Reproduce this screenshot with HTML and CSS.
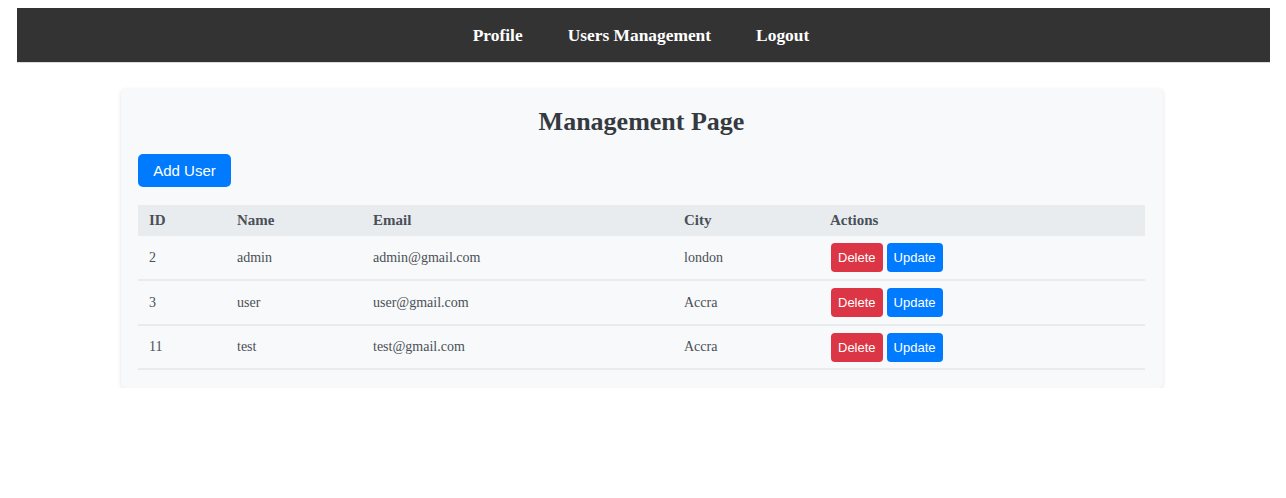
FILE: index.html
```html
<!DOCTYPE html>
<html lang="en">
<head>
<meta charset="utf-8">
<title>Management Page</title>
<link rel="stylesheet" href="styles.css">
</head>
<body>
<nav class="navbar">
  <a class="nav-link" href="#">Profile</a>
  <a class="nav-link" href="#">Users Management</a>
  <a class="nav-link" href="#">Logout</a>
</nav>
<main class="card">
  <h1 class="title">Management Page</h1>
  <button class="btn btn-primary btn-add">Add User</button>
  <table class="users">
    <colgroup>
      <col class="c-id"><col class="c-name"><col class="c-email"><col class="c-city"><col class="c-actions">
    </colgroup>
    <thead>
      <tr><th>ID</th><th>Name</th><th>Email</th><th>City</th><th>Actions</th></tr>
    </thead>
    <tbody>
      <tr><td>2</td><td>admin</td><td>admin@gmail.com</td><td>london</td><td><button class="btn btn-sm btn-danger">Delete</button> <button class="btn btn-sm btn-primary">Update</button></td></tr>
      <tr class="mid"><td>3</td><td>user</td><td>user@gmail.com</td><td>Accra</td><td><button class="btn btn-sm btn-danger">Delete</button> <button class="btn btn-sm btn-primary">Update</button></td></tr>
      <tr><td>11</td><td>test</td><td>test@gmail.com</td><td>Accra</td><td><button class="btn btn-sm btn-danger">Delete</button> <button class="btn btn-sm btn-primary">Update</button></td></tr>
    </tbody>
  </table>
</main>
</body>
</html>
```
FILE: styles.css
```css
body {
  margin: 8px 16px 8px 17px;
  font-family: "Liberation Serif", "Times New Roman", serif;
  background: #fff;
}
.navbar {
  background: #333333;
  height: 55px;
  display: flex;
  justify-content: center;
  align-items: center;
  gap: 45px;
  padding-right: 5px;
  border-bottom: 1px solid #dcdcdc;
  box-sizing: border-box;
}
.nav-link {
  color: #fff;
  text-decoration: none;
  font-weight: bold;
  font-size: 17.4px;
}
.card {
  width: 1042px;
  margin: 26px 0 0 104px;
  box-sizing: border-box;
  padding: 18px 18px 18px 17px;
  background: #f8f9fa;
  border-radius: 5px;
  box-shadow: 0 1px 4px rgba(0,0,0,0.12);
}
.title {
  margin: 0 0 17px;
  text-align: center;
  font-size: 26px;
  line-height: 30px;
  color: #343a40;
}
.btn {
  font-family: "Liberation Sans", Arial, sans-serif;
  color: #fff;
  border: 0;
  border-radius: 4px;
  cursor: pointer;
}
.btn-primary { background: #007bff; }
.btn-danger { background: #dc3545; }
.btn-add {
  width: 93px;
  height: 33px;
  font-size: 15px;
  border-radius: 5px;
  padding: 0;
}
.btn-sm {
  height: 29px;
  font-size: 13px;
  padding: 0 7px;
}
.users {
  width: 100%;
  margin-top: 18px;
  border-collapse: collapse;
  table-layout: fixed;
}
.c-id { width: 88px; }
.c-name { width: 136px; }
.c-email { width: 311px; }
.c-city { width: 146px; }
.users th {
  background: #e9ecef;
  text-align: left;
  font-size: 15px;
  color: #495057;
  height: 31px;
  padding: 0 11px;
}
.users td {
  font-size: 14px;
  color: #495057;
  height: 44px;
  padding: 0 11px;
  border-bottom: 2px solid #e9ecef;
  box-sizing: border-box;
}
.users tr.mid td { height: 45px; }
.users td:last-child { padding-left: 12px; font-size: 0; }
.users td:last-child .btn + .btn { margin-left: 4px; }
```
